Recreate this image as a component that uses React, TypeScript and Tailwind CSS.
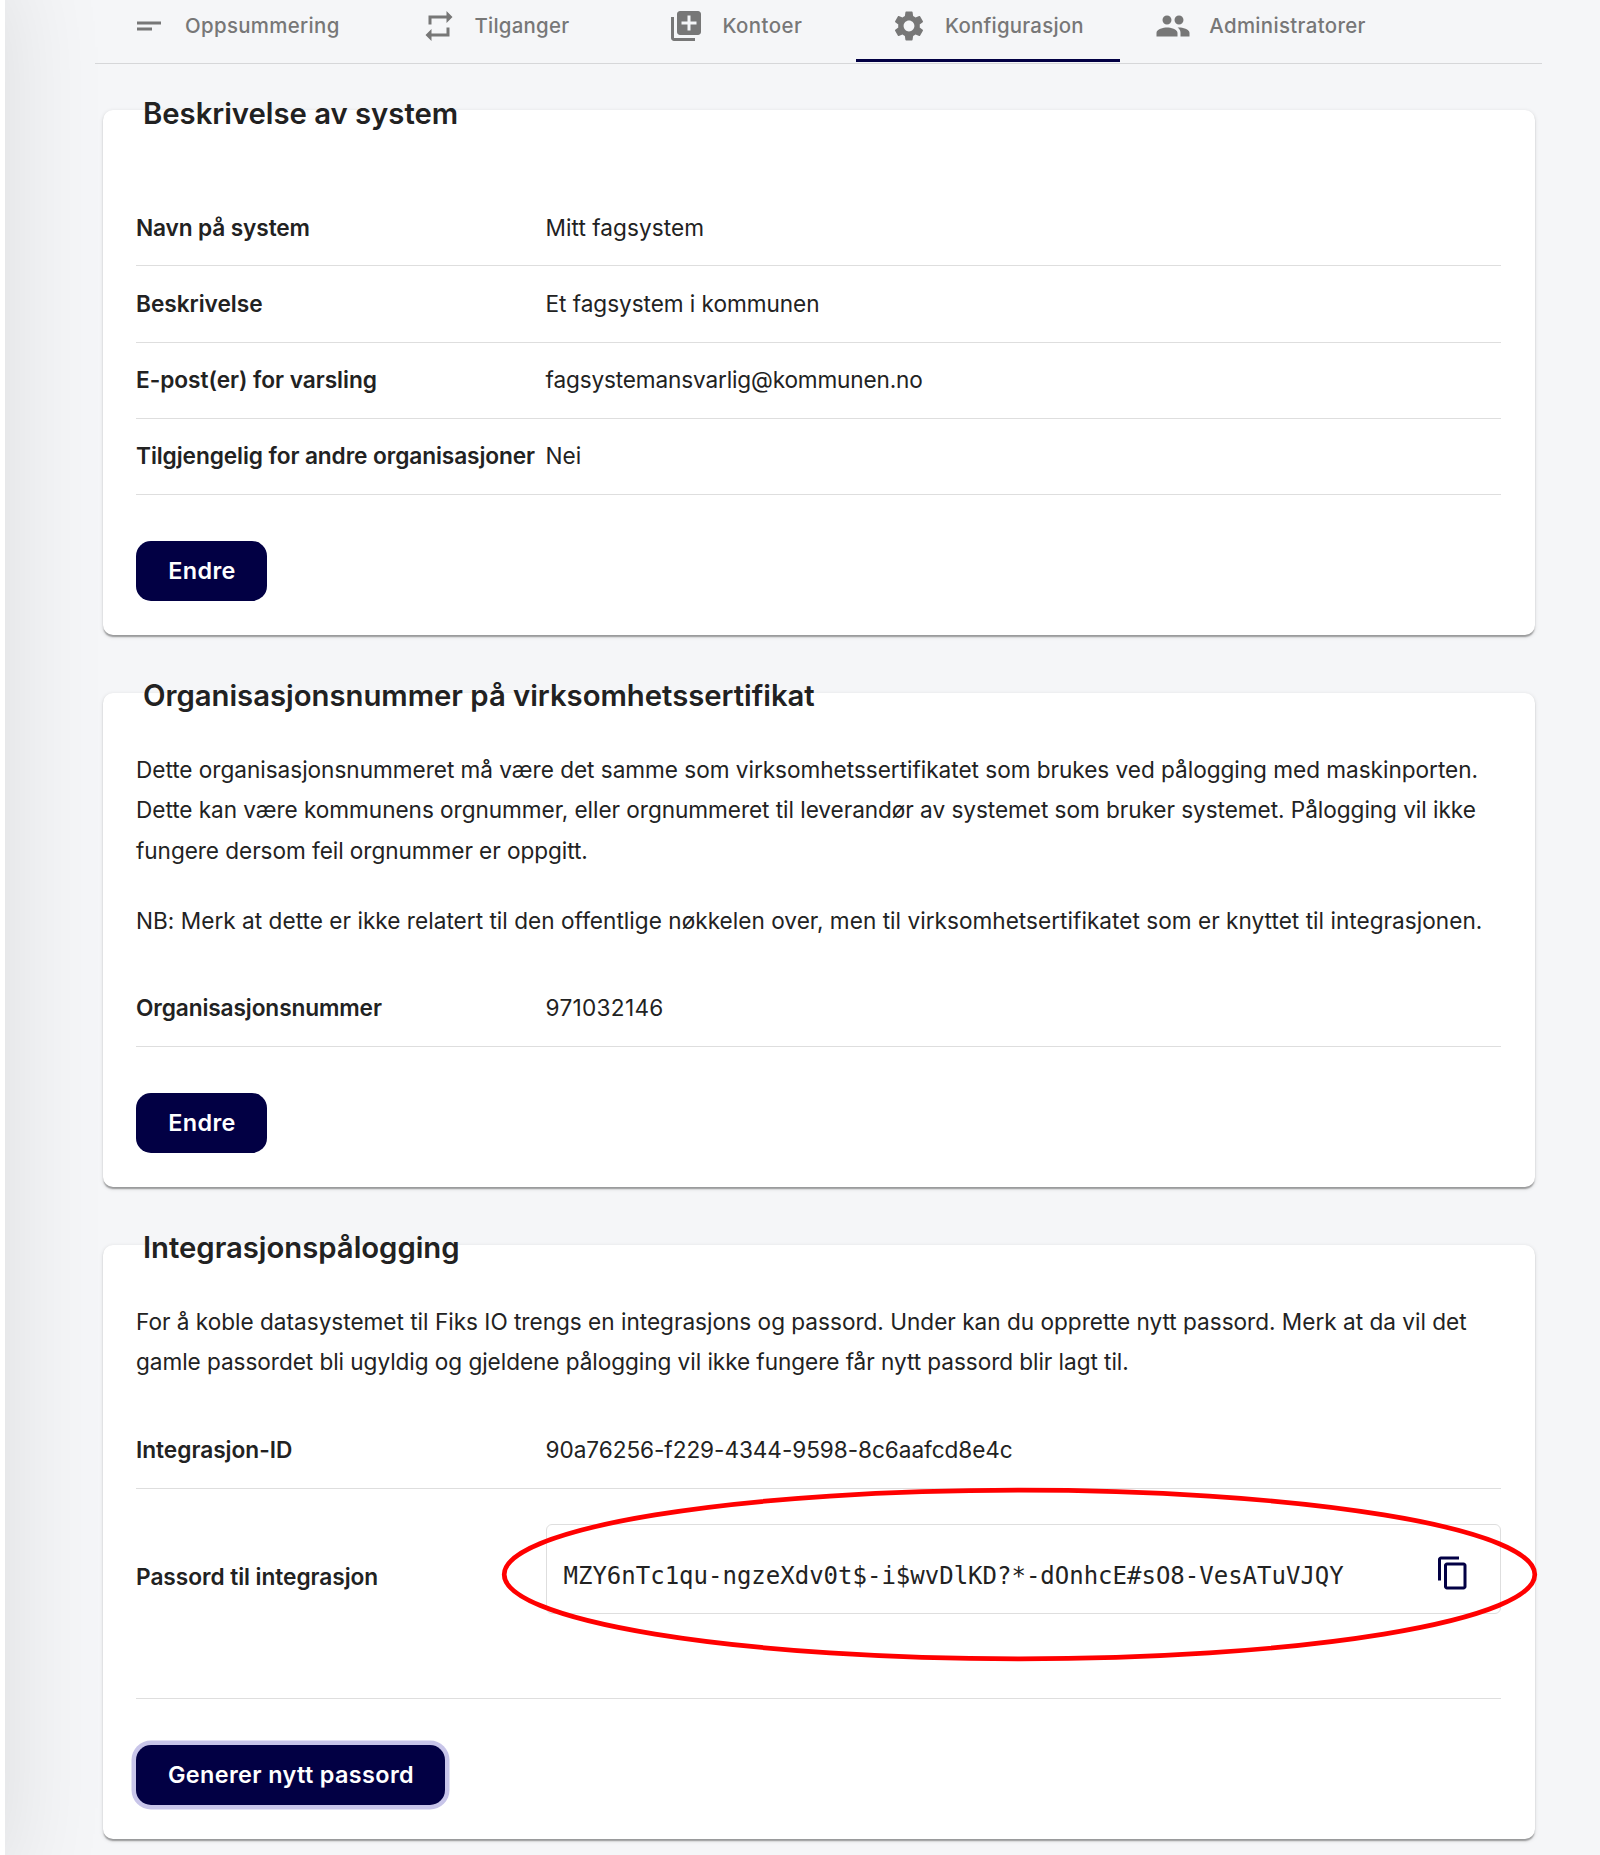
import type { ReactNode } from "react";
import type { IconType } from "react-icons";
import {
  MdContentCopy,
  MdLibraryAdd,
  MdPeople,
  MdRepeat,
  MdSettings,
  MdShortText,
} from "react-icons/md";

type TabProps = {
  icon: IconType;
  label: string;
  className: string;
  labelClass?: string;
  active?: boolean;
};

function Tab({ icon: Icon, label, className, labelClass = "tracking-[0.35px]", active }: TabProps) {
  return (
    <button
      className={`flex h-[62px] shrink-0 items-start border-b-[3px] pt-2 text-left ${
        active ? "border-[#020044]" : "border-transparent"
      } ${className}`}
    >
      <Icon className="size-9 shrink-0" />
      <span className={`ml-[18px] text-[20.4px] leading-9 font-medium whitespace-nowrap ${labelClass}`}>
        {label}
      </span>
    </button>
  );
}

type CardProps = { title: string; titleClass?: string; children: ReactNode };

function Card({ title, titleClass = "-mt-[17px]", children }: CardProps) {
  return (
    <section className="flex flex-col items-stretch rounded-[10px] bg-white pr-[34px] pb-[34px] pl-[33px] shadow-[0_3px_1.5px_-1.5px_rgba(0,0,0,0.2),0_1.5px_1.5px_rgba(0,0,0,0.14),0_1.5px_4.5px_rgba(0,0,0,0.12)]">
      <h2 className={`ml-[7px] text-[29.3px] leading-10 font-semibold tracking-[-0.02px] ${titleClass}`}>
        {title}
      </h2>
      {children}
    </section>
  );
}

type RowProps = { label: string; labelClass?: string; children: ReactNode };

function Row({ label, labelClass = "tracking-[-0.05px]", children }: RowProps) {
  return (
    <div className="flex h-[76.25px] items-center border-b border-[#dedede]">
      <div className={`w-[409.6px] shrink-0 text-[22.7px] font-semibold whitespace-nowrap ${labelClass}`}>
        {label}
      </div>
      <div className="whitespace-nowrap">{children}</div>
    </div>
  );
}

function Line({ children, className = "" }: { children: ReactNode; className?: string }) {
  return <span className={`block whitespace-nowrap ${className}`}>{children}</span>;
}

function Button({ children, className }: { children: ReactNode; className: string }) {
  return (
    <button
      className={`mt-[46px] h-[60px] self-start rounded-[15px] bg-[#020044] pl-px text-[23.4px] font-semibold tracking-[0.38px] whitespace-nowrap text-white ${className}`}
    >
      {children}
    </button>
  );
}

export default function App() {
  return (
    <div className="relative flex h-[1855px] w-[1600px] overflow-hidden bg-[#f5f6f8] font-['Inter',sans-serif] text-[22.6px] text-[#222222]">
      {/* Side panel edge casting its shadow on the page */}
      <div className="absolute -top-8 -bottom-8 -left-[395px] w-[400px] bg-white shadow-[0_0_100px_rgba(0,0,0,0.11)]" />

      <main className="relative ml-[95px] w-[1447px]">
        <nav className="flex h-16 border-b border-[#d6d7d9] text-[#777777]">
          <Tab icon={MdShortText} label="Oppsummering" className="w-[291px] pl-9" />
          <Tab icon={MdRepeat} label="Tilganger" className="w-[247px] pl-[34.5px]" labelClass="tracking-[0.25px]" />
          <Tab icon={MdLibraryAdd} label="Kontoer" className="w-[223px] pl-[35.4px]" labelClass="tracking-[0.45px]" />
          <Tab
            icon={MdSettings}
            label="Konfigurasjon"
            className="w-[264px] pl-[35px]"
            labelClass="tracking-[0.24px]"
            active
          />
          <Tab icon={MdPeople} label="Administratorer" className="w-[247px] pl-[35.3px]" />
        </nav>

        <div className="mt-[46px] ml-2 flex w-[1432px] flex-col gap-[58px]">
          <Card title="Beskrivelse av system" titleClass="-mt-4">
            <div className="mt-14">
              <Row label="Navn på system" labelClass="tracking-[-0.14px]">
                <span className="tracking-[0.05px]">Mitt fagsystem</span>
              </Row>
              <Row label="Beskrivelse">
                <span className="tracking-[-0.05px]">Et fagsystem i kommunen</span>
              </Row>
              <Row label="E-post(er) for varsling">
                <span className="tracking-[-0.15px]">fagsystemansvarlig@kommunen.no</span>
              </Row>
              <Row label="Tilgjengelig for andre organisasjoner" labelClass="tracking-[-0.1px]">
                Nei
              </Row>
            </div>
            <Button className="w-[131px]">Endre</Button>
          </Card>

          <Card title="Organisasjonsnummer på virksomhetssertifikat">
            <p className="mt-[33.9px] leading-[40.6px]">
              <Line className="tracking-[-0.03px]">
                Dette organisasjonsnummeret må være det samme som virksomhetssertifikatet som brukes ved
                pålogging med maskinporten.
              </Line>
              <Line className="tracking-[-0.05px]">
                Dette kan være kommunens orgnummer, eller orgnummeret til leverandør av systemet som
                bruker systemet. Pålogging vil ikke
              </Line>
              <Line className="tracking-[-0.06px]">fungere dersom feil orgnummer er oppgitt.</Line>
            </p>
            <p className="mt-[29.1px] leading-[40.6px]">
              <Line className="tracking-[0.025px]">
                NB: Merk at dette er ikke relatert til den offentlige nøkkelen over, men til
                virksomhetsertifikatet som er knyttet til integrasjonen.
              </Line>
            </p>
            <div className="mt-[29.35px]">
              <Row label="Organisasjonsnummer" labelClass="tracking-[-0.12px]">
                <span className="tracking-[0.3px]">971032146</span>
              </Row>
            </div>
            <Button className="w-[131px]">Endre</Button>
          </Card>

          <Card title="Integrasjonspålogging">
            <p className="mt-[33.9px] leading-[40.6px]">
              <Line className="tracking-[-0.01px]">
                For å koble datasystemet til Fiks IO trengs en integrasjons og passord. Under kan du
                opprette nytt passord. Merk at da vil det
              </Line>
              <Line className="tracking-[-0.06px]">
                gamle passordet bli ugyldig og gjeldene pålogging vil ikke fungere får nytt passord blir
                lagt til.
              </Line>
            </p>
            <div className="mt-[29.65px]">
              <Row label="Integrasjon-ID" labelClass="tracking-[-0.03px]">
                <span className="tracking-[-0.06px]">90a76256-f229-4344-9598-8c6aafcd8e4c</span>
              </Row>
              <div className="relative flex h-[210px] items-start border-b border-[#dedede]">
                <div className="mt-[68px] w-[410px] shrink-0 text-[22.7px] leading-10 font-semibold tracking-[-0.05px]">
                  Passord til integrasjon
                </div>
                <div className="mt-[35px] flex h-[90px] flex-1 items-start rounded-md border border-[#dedede] pr-[29px] pl-[16.5px]">
                  <code className="mt-[31px] flex-1 font-['DejaVu_Sans_Mono',monospace] text-[24px] leading-10 whitespace-nowrap">
                    MZY6nTc1qu-ngzeXdv0t$-i$wvDlKD?*-dOnhcE#sO8-VesATuVJQY
                  </code>
                  <button aria-label="Kopier passord" className="mt-[30px] text-[#020044]">
                    <MdContentCopy className="size-9" />
                  </button>
                </div>
                <svg
                  className="pointer-events-none absolute top-[-3px] left-[364px] h-[178px] w-[1040px]"
                  viewBox="0 0 1040 178"
                  fill="none"
                >
                  <ellipse cx="519.5" cy="88.5" rx="515.3" ry="84.3" stroke="#ff0000" strokeWidth="4.7" />
                </svg>
              </div>
            </div>
            <Button className="w-[309px] shadow-[0_0_0_4.5px_#c8c5e9]">Generer nytt passord</Button>
          </Card>
        </div>
      </main>
    </div>
  );
}
